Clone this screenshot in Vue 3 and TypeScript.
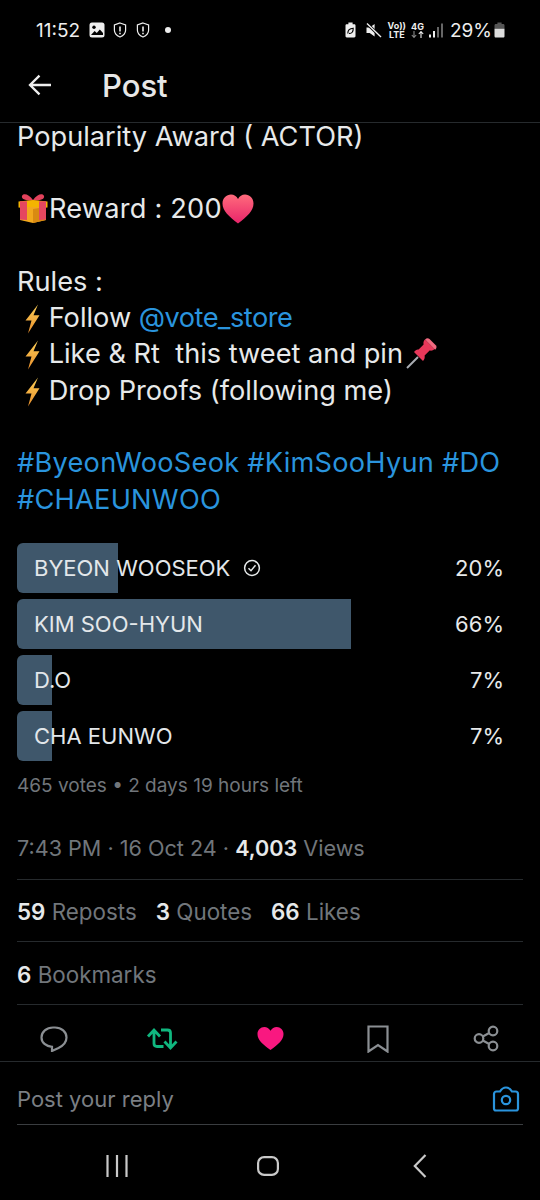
<script setup lang="ts">
interface PollOption {
  label: string
  percent: number
  voted?: boolean
}

const options: PollOption[] = [
  { label: 'BYEON WOOSEOK', percent: 20, voted: true },
  { label: 'KIM SOO-HYUN', percent: 66 },
  { label: 'D.O', percent: 7 },
  { label: 'CHA EUNWO', percent: 7 },
]
</script>

<template>
  <div class="screen">
    <div class="status">
      <span class="time">11:52</span>
      <svg class="st-photo" width="16" height="16" viewBox="0 0 16 16">
        <rect x="0.5" y="0.5" width="15" height="15" rx="2.5" fill="#eee" />
        <circle cx="5" cy="5.2" r="1.7" fill="#000" />
        <path d="M2 13l3.600-4 2.200 2 3-3.600L14 11v2z" fill="#000" />
      </svg>
      <svg class="st-shield" width="14" height="16" viewBox="0 0 14 16">
        <path d="M7 1l5.600 2v5.200c0 3.200-2.400 5.400-5.600 6.800-3.200-1.400-5.600-3.600-5.600-6.800V3z" fill="none" stroke="#eee" stroke-width="1.200" />
        <path d="M7 4.400v5M7 10.800v1.400" stroke="#eee" stroke-width="1.600" />
      </svg>
      <svg class="st-shield" width="14" height="16" viewBox="0 0 14 16">
        <path d="M7 1l5.600 2v5.200c0 3.200-2.400 5.400-5.600 6.800-3.200-1.400-5.600-3.600-5.600-6.800V3z" fill="none" stroke="#eee" stroke-width="1.200" />
        <path d="M7 4.400v5M7 10.800v1.400" stroke="#eee" stroke-width="1.600" />
      </svg>
      <span class="st-dot"></span>
      <div class="st-right">
        <svg width="11" height="16" viewBox="0 0 11 16">
          <path d="M3.400 0.600h4.200v1.600h1.600c.8 0 1.300.5 1.300 1.300v10.600c0 .8-.5 1.300-1.300 1.300H1.800c-.8 0-1.300-.5-1.300-1.300V3.500c0-.8.5-1.300 1.300-1.300h1.600z" fill="#eee" />
          <path d="M2.800 11.400c0-3.200 2-5 5.400-5.200.2 3.400-1.400 5.600-4.200 5.200" fill="none" stroke="#000" stroke-width="1.100" />
        </svg>
        <svg class="st-mute" width="16" height="15" viewBox="0 0 16 15">
          <path d="M0.500 4.600h3.200L8.600 1v12.600L3.700 10H0.500z" fill="#eee" />
          <path d="M1 .6l14 13.400" stroke="#000" stroke-width="3" />
          <path d="M1 .6l14 13.400" stroke="#eee" stroke-width="1.400" />
        </svg>
        <span class="st-stack st-volte"><b>Vo))</b><b>LTE</b></span>
        <span class="st-stack st-net">
          <b>4G</b>
          <svg width="13" height="7" viewBox="0 0 13 7">
            <path d="M3 0v6M0.800 4l2.200 2.400L5.200 4" fill="none" stroke="#888" stroke-width="1.100" />
            <path d="M10 7V1M7.800 3L10 .6 12.200 3" fill="none" stroke="#eee" stroke-width="1.100" />
          </svg>
        </span>
        <svg class="st-signal" width="14" height="15" viewBox="0 0 14 15">
          <rect x="0" y="11.500" width="2" height="3" fill="#eee" />
          <rect x="4" y="8" width="2" height="6.500" fill="#eee" />
          <rect x="8" y="4" width="2" height="10.500" fill="#666" />
          <rect x="12" y="0.500" width="2" height="14" fill="#666" />
        </svg>
        <span class="st-pct">29%</span>
        <svg width="11" height="16" viewBox="0 0 11 16">
          <path d="M3.400 0.500h4.200v1.500H9c1 0 1.500.5 1.500 1.500v2.500H.5V3.500C.5 2.500 1 2 2 2h1.400z" fill="#555" />
          <path d="M.5 6.600h10v7.400c0 1-.5 1.500-1.500 1.500H2c-1 0-1.500-.5-1.500-1.500z" fill="#ddd" />
        </svg>
      </div>
    </div>

    <header class="topbar">
      <svg width="24" height="22" viewBox="0 0 24 22">
        <path d="M23 11H2.500M11.500 1.600L2 11l9.500 9.400" fill="none" stroke="#eee" stroke-width="2.300" />
      </svg>
      <h1>Post</h1>
    </header>

    <main class="content">
      <div class="body">
        <p>Popularity Award ( ACTOR)</p>
        <p class="gap">
          <svg class="emoji gift" width="32" height="32" viewBox="0 0 32 32">
            <path d="M16 8C12 2 6 1 5 4s4 5 11 4.500zM16 8c4-6 10-7 11-4s-4 5-11 4.500z" fill="#e2425c" />
            <path d="M1.500 9.500 16 8l14.500 1.500v6L16 17 1.500 15.500z" fill="#f4b400" />
            <path d="M3 15h26v13l-13 3-13-3z" fill="#f2a81d" />
            <path d="M16 17v14l13-3V15z" fill="#d98a12" />
            <path d="M3 9.200h7V28l-7-.6zM22 9.200h7V27.400l-7 .6z" fill="#e5475f" />
          </svg><span class="reward">Reward : 200</span><svg class="emoji" width="32" height="30" viewBox="0 0 32 30">
            <defs>
              <linearGradient id="heartFill" x1="0" y1="0" x2="0" y2="1">
                <stop offset="0" stop-color="#ff6b7c" />
                <stop offset="1" stop-color="#e8246a" />
              </linearGradient>
            </defs>
            <path d="M16 29.500C7 22.500.500 17 .500 9.500.500 4 4.500.500 9 .500c3 0 5.500 1.500 7 4.500 1.500-3 4-4.500 7-4.500 4.500 0 8.500 3.500 8.500 9 0 7.500-6.500 13-15.500 20z" fill="url(#heartFill)" />
          </svg>
        </p>
        <p class="gap">Rules :</p>
        <p>
          <svg class="emoji bolt" width="15" height="30" viewBox="0 0 15 28" preserveAspectRatio="none"><defs><linearGradient id="boltFill" x1="0" y1="0" x2="0" y2="1"><stop offset="0" stop-color="#fbcf57" /><stop offset="1" stop-color="#ea8f2c" /></linearGradient></defs><path d="M13 .5L.5 15.500h6L3 27.500 14.500 10.500h-6z" fill="url(#boltFill)" /></svg>
          Follow <a class="mention">@vote_store</a>
        </p>
        <p>
          <svg class="emoji bolt" width="15" height="30" viewBox="0 0 15 28" preserveAspectRatio="none"><path d="M13 .5L.5 15.500h6L3 27.500 14.500 10.500h-6z" fill="url(#boltFill)" /></svg>
          Like &amp; Rt&nbsp; this tweet and pin<svg class="emoji pin" width="32" height="32" viewBox="0 0 32 32">
            <path d="M1 31l11-11" stroke="#a9adb3" stroke-width="2" />
            <path d="M8 15l9 9c1.500-1.500 2-3.500 1.600-5.500l5-5c2 .4 3.500 0 4.900-1.400L19 2.500c-1.400 1.400-1.800 3-1.400 5l-5 5c-2-.4-3.100 1-4.600 2.500z" fill="#e8385a" />
            <path d="M19 2.500c1.500-1.400 3-1.700 4.500-.6l6.500 6.500c1 1.500.5 3-.9 4.300z" fill="#f26a80" />
          </svg>
        </p>
        <p>
          <svg class="emoji bolt" width="15" height="30" viewBox="0 0 15 28" preserveAspectRatio="none"><path d="M13 .5L.5 15.500h6L3 27.500 14.500 10.500h-6z" fill="url(#boltFill)" /></svg>
          Drop Proofs (following me)
        </p>
        <p class="gap"><a class="tags">#ByeonWooSeok #KimSooHyun #DO</a></p>
        <p><a class="tags">#CHAEUNWOO</a></p>
      </div>

      <div class="poll">
        <div v-for="opt in options" :key="opt.label" class="option">
          <div class="track">
            <div class="fill" :style="{ width: opt.percent + '%' }"></div>
            <span class="label">{{ opt.label }}</span>
            <svg v-if="opt.voted" class="voted" width="18" height="18" viewBox="0 0 18 18">
              <circle cx="9" cy="9" r="7.400" fill="none" stroke="#e6e9ea" stroke-width="1.500" />
              <path d="M5.500 9.200l2.500 2.500 4.500-5.400" fill="none" stroke="#e6e9ea" stroke-width="1.500" />
            </svg>
          </div>
          <span class="pct">{{ opt.percent }}%</span>
        </div>
      </div>
      <div class="votes">465 votes • 2 days 19 hours left</div>

      <div class="meta">7:43 PM · 16 Oct 24 · <b>4,003</b> Views</div>
      <div class="stats first">
        <span><b>59</b> Reposts</span>
        <span><b>3</b> Quotes</span>
        <span><b>66</b> Likes</span>
      </div>
      <div class="stats"><span><b>6</b> Bookmarks</span></div>

      <div class="actions">
        <svg width="28" height="26" viewBox="0 0 28 26">
          <path d="M13 1.500h2c6.500 0 11.500 4.500 11.500 10 0 5-4 8.500-8 10.500L12 25v-4.200C6 20.500 1.500 16.500 1.500 11.500c0-5.500 5-10 11.500-10z" fill="none" stroke="#8b8f93" stroke-width="2.200" />
        </svg>
        <svg width="32" height="24" viewBox="0 0 32 24">
          <path d="M8 3v13.500q0 3 3 3h6.500M2 9.500L8 3l6 6.500M15 3h6.500q3 0 3 3v14M18.500 14.500l6 6.500 6-6.500" fill="none" stroke="#10b77f" stroke-width="2.800" />
        </svg>
        <svg width="27" height="25" viewBox="0 0 28 25">
          <path d="M14 24.500C6 18.500.500 14 .500 7.800.500 3.500 3.800.500 7.500.500c2.800 0 5 1.400 6.500 4 1.500-2.600 3.700-4 6.500-4 3.700 0 7 3 7 7.300C27.500 14 22 18.500 14 24.500z" fill="#f91880" />
        </svg>
        <svg width="22" height="28" viewBox="0 0 22 28">
          <path d="M1.500 1.500h19v25L11 20l-9.500 6.500z" fill="none" stroke="#8b8f93" stroke-width="2.200" />
        </svg>
        <svg width="26" height="27" viewBox="0 0 26 27">
          <circle cx="20" cy="6" r="4.300" fill="none" stroke="#8b8f93" stroke-width="2.200" />
          <circle cx="6" cy="13.500" r="4.300" fill="none" stroke="#8b8f93" stroke-width="2.200" />
          <circle cx="20" cy="21" r="4.300" fill="none" stroke="#8b8f93" stroke-width="2.200" />
          <path d="M9.800 11.500l6.400-3.500M9.800 15.500l6.400 3.500" stroke="#8b8f93" stroke-width="2.200" />
        </svg>
      </div>

      <div class="reply">
        <span>Post your reply</span>
        <svg width="28" height="26" viewBox="0 0 28 26">
          <path d="M2 8c0-1.500 1-2.500 2.500-2.500H8C9.500 3 11.500 1.500 14 1.500s4.500 1.500 6 4h3.500C25 5.500 26 6.500 26 8v14.500c0 1-.8 2-2 2H4c-1.200 0-2-1-2-2z" fill="none" stroke="#2a94dd" stroke-width="2.200" />
          <circle cx="14" cy="14" r="4.200" fill="none" stroke="#2a94dd" stroke-width="2.200" />
        </svg>
      </div>
    </main>

    <nav class="sysnav">
      <svg width="22" height="22" viewBox="0 0 22 22">
        <path d="M1.500 0v22M11 0v22M20.500 0v22" stroke="#c9c9c9" stroke-width="2.200" />
      </svg>
      <svg class="home" width="22" height="22" viewBox="0 0 22 22">
        <rect x="1.100" y="2.100" width="19.800" height="17.800" rx="6" fill="none" stroke="#c9c9c9" stroke-width="2.200" />
      </svg>
      <svg width="14" height="24" viewBox="0 0 14 24">
        <path d="M12.500 1L1.800 12l10.700 11" fill="none" stroke="#c9c9c9" stroke-width="2.200" />
      </svg>
    </nav>
  </div>
</template>

<style>
html,
body {
  background: #000;
}
</style>

<style scoped>
.screen {
  width: 540px;
  height: 1200px;
  overflow: hidden;
  background: #000;
  color: #e7e9ea;
  font-family: Inter, "Liberation Sans", sans-serif;
  display: flex;
  flex-direction: column;
}

.status {
  height: 60px;
  display: flex;
  align-items: center;
  padding: 0 35px 0 36px;
  color: #eee;
}
.time {
  font-size: 19px;
  width: 53px;
  white-space: nowrap;
}
.st-shield {
  margin-left: 9px;
}
.st-photo + .st-shield {
  margin-left: 8px;
}
.st-dot {
  width: 6px;
  height: 6px;
  border-radius: 50%;
  background: #eee;
  margin-left: 15px;
}
.st-right {
  margin-left: auto;
  display: flex;
  align-items: center;
}
.st-mute {
  margin-left: 10px;
}
.st-stack {
  display: flex;
  flex-direction: column;
  align-items: center;
  line-height: 9px;
  font-size: 9px;
}
.st-stack b {
  font-weight: 700;
}
.st-volte {
  margin-left: 6px;
}
.st-net {
  margin-left: 5px;
}
.st-signal {
  margin-left: 5px;
}
.st-pct {
  font-size: 19px;
  margin: 0 2px 0 7px;
}

.topbar {
  position: relative;
  z-index: 1;
  height: 63px;
  flex: none;
  display: flex;
  align-items: center;
  padding: 0 0 12px 28px;
  background: #000;
  border-bottom: 1px solid #262a2d;
  box-sizing: border-box;
}
.topbar h1 {
  margin: 0 0 0 50px;
  font-size: 31px;
  font-weight: 500;
  color: #e7e7e7;
}

.content {
  flex: 1;
  padding: 0 17px;
  margin-top: -4.4px;
}

.body {
  font-size: 27.2px;
  line-height: 36.3px;
  font-weight: 400;
}
.body p {
  margin: 0;
  white-space: nowrap;
}
.body .gap {
  margin-top: 36.3px;
}
.body a {
  color: #2a94dd;
}
.mention {
  letter-spacing: -0.5px;
}
.tags {
  letter-spacing: 0.25px;
}
.reward {
  letter-spacing: 0.2px;
}
.emoji {
  vertical-align: -6px;
}
.pin {
  margin-left: 3px;
}
.bolt {
  margin-left: 8px;
  margin-right: 1px;
  vertical-align: -7px;
}

.poll {
  margin-top: 25.4px;
  display: flex;
  flex-direction: column;
  gap: 6px;
}
.option {
  display: flex;
  align-items: center;
  height: 50px;
}
.track {
  position: relative;
  width: 506px;
  flex: none;
  height: 100%;
  display: flex;
  align-items: center;
  padding-left: 17px;
  box-sizing: border-box;
}
.fill {
  position: absolute;
  left: 0;
  top: 0;
  bottom: 0;
  background: #3f576b;
  border-radius: 6px 0 0 6px;
}
.label {
  position: relative;
  font-size: 22px;
  color: #e3e7ea;
}
.voted {
  position: relative;
  margin-left: 13px;
}
.pct {
  margin-left: -79px;
  width: 60px;
  text-align: right;
  font-size: 22px;
  position: relative;
  white-space: nowrap;
}
.votes {
  margin-top: 13px;
  font-size: 19px;
  color: #71767b;
}
.meta {
  margin-top: 38px;
  font-size: 21.6px;
  height: 44px;
  color: #71767b;
  border-bottom: 1px solid #262a2d;
}
.meta b,
.stats b {
  color: #e7e9ea;
  font-weight: 600;
}
.stats {
  height: 60px;
  padding-top: 2px;
  display: flex;
  align-items: center;
  gap: 19px;
  font-size: 22.4px;
  color: #71767b;
  border-bottom: 1px solid #262a2d;
}
.stats.first {
  height: 59px;
}
.actions {
  height: 45px;
  padding-top: 11px;
  margin: 0 -17px;
  display: grid;
  grid-template-columns: repeat(5, 108px);
  justify-items: center;
  align-items: center;
  border-bottom: 1px solid #262a2d;
}
.reply {
  height: 50px;
  padding: 12px 3px 0 0;
  display: flex;
  align-items: center;
  justify-content: space-between;
  font-size: 22px;
  color: #7b7f84;
  border-bottom: 1px solid #3a3d40;
}

.sysnav {
  height: 68px;
  flex: none;
  display: flex;
  align-items: center;
  justify-content: space-between;
  padding: 0 113px 0 106px;
}
.home {
  margin-right: 5px;
}
</style>
